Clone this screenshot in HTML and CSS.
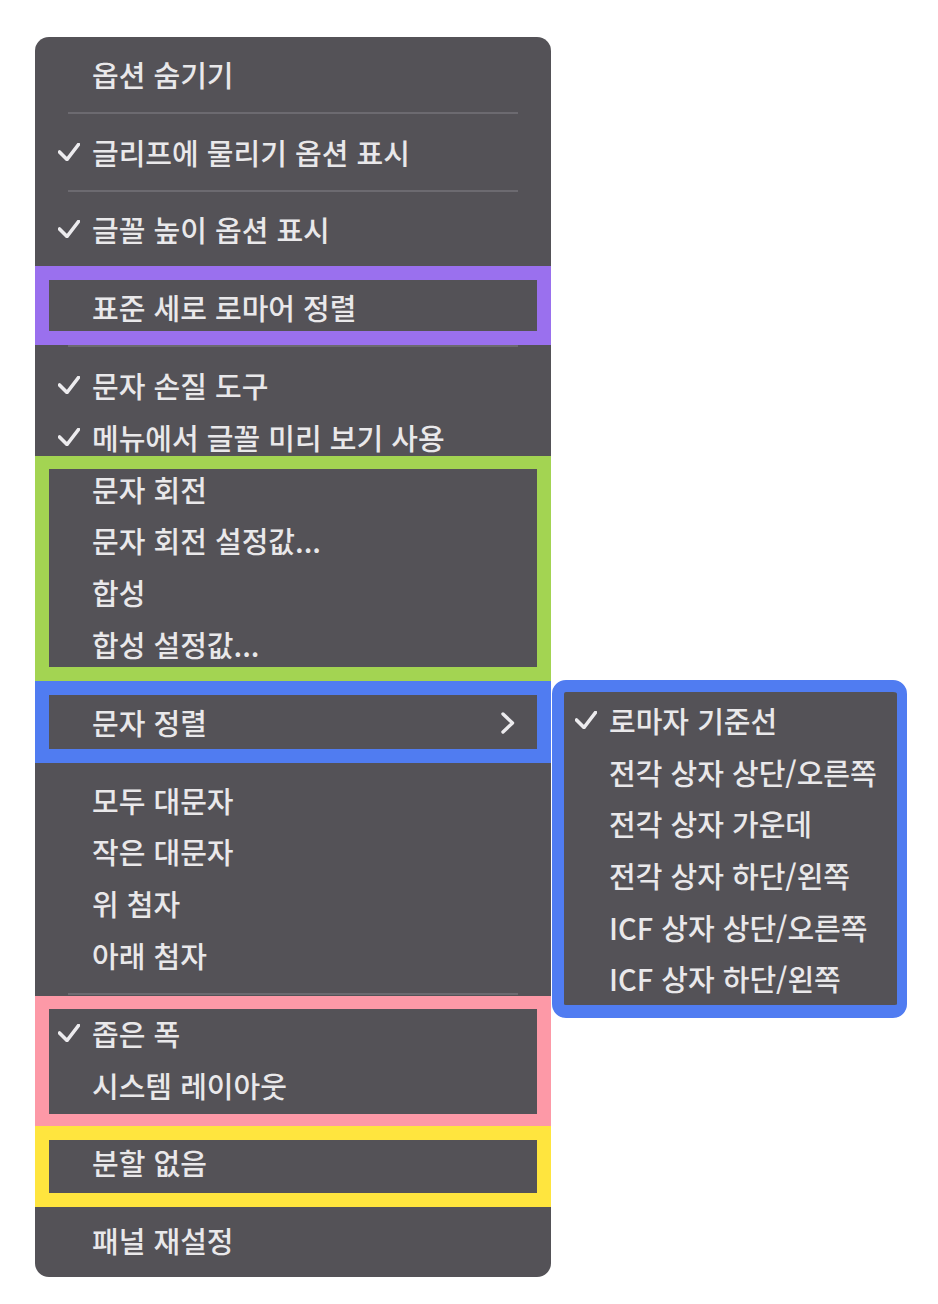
FILE: index.html
```html
<!DOCTYPE html>
<html lang="ko">
<head>
<meta charset="utf-8">
<title>메뉴</title>
<link rel="stylesheet" href="styles.css">
</head>
<body>
<div class="stage">
  <div class="menu">
    <div class="item"><span class="mark"></span><span class="label">옵션 숨기기</span></div>
    <div class="sep"></div>
    <div class="item"><span class="mark"><svg class="check" viewBox="0 0 22 18"><polyline points="1.5,9 9,16.5 20.5,1.5"/></svg></span><span class="label">글리프에 물리기 옵션 표시</span></div>
    <div class="sep"></div>
    <div class="item"><span class="mark"><svg class="check" viewBox="0 0 22 18"><polyline points="1.5,9 9,16.5 20.5,1.5"/></svg></span><span class="label">글꼴 높이 옵션 표시</span></div>
    <div class="sep"></div>
    <div class="item"><span class="mark"></span><span class="label">표준 세로 로마어 정렬</span></div>
    <div class="sep"></div>
    <div class="item"><span class="mark"><svg class="check" viewBox="0 0 22 18"><polyline points="1.5,9 9,16.5 20.5,1.5"/></svg></span><span class="label">문자 손질 도구</span></div>
    <div class="item"><span class="mark"><svg class="check" viewBox="0 0 22 18"><polyline points="1.5,9 9,16.5 20.5,1.5"/></svg></span><span class="label">메뉴에서 글꼴 미리 보기 사용</span></div>
    <div class="item"><span class="mark"></span><span class="label">문자 회전</span></div>
    <div class="item"><span class="mark"></span><span class="label">문자 회전 설정값...</span></div>
    <div class="item"><span class="mark"></span><span class="label">합성</span></div>
    <div class="item"><span class="mark"></span><span class="label">합성 설정값...</span></div>
    <div class="sep"></div>
    <div class="item has-sub"><span class="mark"></span><span class="label">문자 정렬</span>
      <svg class="chevron" viewBox="0 0 14 22"><polyline points="2,2 11.5,11 2,20"/></svg>
      <div class="submenu">
        <div class="sub-item"><span class="mark"><svg class="check" viewBox="0 0 22 18"><polyline points="1.5,9 9,16.5 20.5,1.5"/></svg></span><span class="label">로마자 기준선</span></div>
        <div class="sub-item"><span class="mark"></span><span class="label">전각 상자 상단/오른쪽</span></div>
        <div class="sub-item"><span class="mark"></span><span class="label">전각 상자 가운데</span></div>
        <div class="sub-item"><span class="mark"></span><span class="label">전각 상자 하단/왼쪽</span></div>
        <div class="sub-item"><span class="mark"></span><span class="label">ICF 상자 상단/오른쪽</span></div>
        <div class="sub-item"><span class="mark"></span><span class="label">ICF 상자 하단/왼쪽</span></div>
      </div>
    </div>
    <div class="sep"></div>
    <div class="item"><span class="mark"></span><span class="label">모두 대문자</span></div>
    <div class="item"><span class="mark"></span><span class="label">작은 대문자</span></div>
    <div class="item"><span class="mark"></span><span class="label">위 첨자</span></div>
    <div class="item"><span class="mark"></span><span class="label">아래 첨자</span></div>
    <div class="sep"></div>
    <div class="item"><span class="mark"><svg class="check" viewBox="0 0 22 18"><polyline points="1.5,9 9,16.5 20.5,1.5"/></svg></span><span class="label">좁은 폭</span></div>
    <div class="item"><span class="mark"></span><span class="label">시스템 레이아웃</span></div>
    <div class="sep"></div>
    <div class="item"><span class="mark"></span><span class="label">분할 없음</span></div>
    <div class="sep"></div>
    <div class="item"><span class="mark"></span><span class="label">패널 재설정</span></div>

    <div class="hl hl-purple"></div>
    <div class="hl hl-green"></div>
    <div class="hl hl-blue"></div>
    <div class="hl hl-pink"></div>
    <div class="hl hl-yellow"></div>
  </div>
</div>
</body>
</html>
```

FILE: styles.css
```css
html, body {
  margin: 0;
  padding: 0;
  background: #ffffff;
}

body {
  font-family: "Noto Sans CJK KR", "Noto Sans", sans-serif;
  color: #e9e8ea;
}

.stage {
  padding: 37px 0 0 35px;
}

.menu {
  position: relative;
  width: 516px;
  box-sizing: border-box;
  padding: 11px 0;
  background: #545257;
  border-radius: 14px;
}

.item,
.sub-item {
  display: flex;
  align-items: center;
  height: 51.8px;
  font-size: 29px;
  font-weight: 500;
  letter-spacing: 0;
  line-height: 1;
  white-space: nowrap;
}

.item {
  padding-left: 23px;
}

.mark {
  flex: none;
  width: 34px;
  display: flex;
  align-items: center;
}

.check {
  width: 22px;
  height: 18px;
  fill: none;
  stroke: #ecebee;
  stroke-width: 3.6;
  stroke-linecap: round;
  stroke-linejoin: round;
}

.label {
  padding-top: 1px;
}

.sep {
  height: 26px;
  display: flex;
  align-items: center;
  padding: 0 33px;
}

.sep::before {
  content: "";
  flex: 1;
  height: 2px;
  background: #6c6a70;
}

.has-sub {
  position: relative;
}

.chevron {
  position: absolute;
  right: 36px;
  top: 16px;
  width: 14px;
  height: 22px;
  fill: none;
  stroke: #ecebee;
  stroke-width: 3.4;
  stroke-linecap: round;
  stroke-linejoin: round;
}

.submenu {
  position: absolute;
  left: calc(100% + 1px);
  top: -16px;
  width: 355px;
  box-sizing: border-box;
  padding: 2px 0 1px;
  border: 12px solid #507cf1;
  border-right-width: 10px;
  border-bottom-width: 13px;
  border-radius: 14px;
  background: #545257;
  z-index: 2;
}

.sub-item {
  padding-left: 11px;
  height: 51.7px;
}

.hl {
  position: absolute;
  left: 0;
  width: 516px;
  box-sizing: border-box;
  border: 14px solid;
  pointer-events: none;
}

.hl-purple {
  top: 229px;
  height: 79px;
  border-color: #9a70ee;
}

.hl-green {
  top: 419px;
  height: 225px;
  border-color: #a3d452;
  border-top-width: 13px;
}

.hl-blue {
  top: 644px;
  height: 82px;
  border-color: #507cf1;
}

.hl-pink {
  top: 959px;
  height: 130px;
  border-color: #fd99a7;
  border-top-width: 13px;
  border-bottom-width: 12px;
}

.hl-yellow {
  top: 1089px;
  height: 81px;
  border-color: #ffe53e;
}
```
